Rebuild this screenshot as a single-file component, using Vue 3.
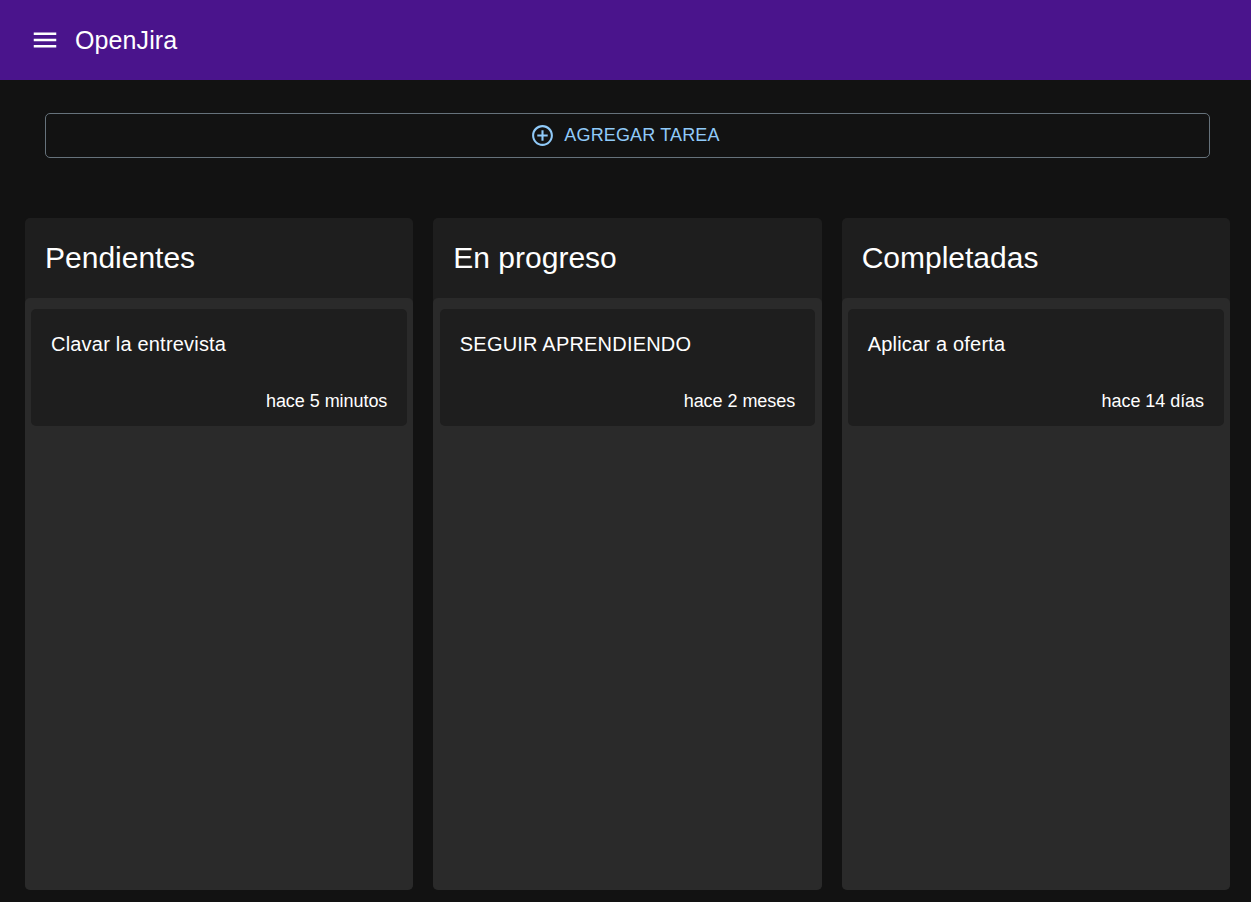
<template>
    <div class="page">
        <header class="navbar">
            <button class="menu-btn" aria-label="menu">
                <svg viewBox="0 0 24 24" width="30" height="30">
                    <path d="M3 18h18v-2H3v2zm0-5h18v-2H3v2zm0-7v2h18V6H3z" />
                </svg>
            </button>
            <span class="brand">OpenJira</span>
        </header>

        <main class="content">
            <button class="add-btn">
                <svg viewBox="0 0 24 24" width="25" height="25">
                    <path d="M13 7h-2v4H7v2h4v4h2v-4h4v-2h-4V7zm-1-5C6.48 2 2 6.48 2 12s4.48 10 10 10 10-4.48 10-10S17.52 2 12 2zm0 18c-4.41 0-8-3.59-8-8s3.59-8 8-8 8 3.59 8 8-3.59 8-8 8z" />
                </svg>
                AGREGAR TAREA
            </button>

            <div class="board">
                <section v-for="col in columns" :key="col.title" class="column">
                    <h2 class="column-title">{{ col.title }}</h2>
                    <div class="column-body">
                        <article v-for="task in col.tasks" :key="task.text" class="task">
                            <p class="task-text">{{ task.text }}</p>
                            <span class="task-date">{{ task.date }}</span>
                        </article>
                    </div>
                </section>
            </div>
        </main>
    </div>
</template>

<script setup>
const columns = [
    { title: 'Pendientes', tasks: [{ text: 'Clavar la entrevista', date: 'hace 5 minutos' }] },
    { title: 'En progreso', tasks: [{ text: 'SEGUIR APRENDIENDO', date: 'hace 2 meses' }] },
    { title: 'Completadas', tasks: [{ text: 'Aplicar a oferta', date: 'hace 14 días' }] }
]
</script>

<style>
html,
body {
    margin: 0;
    background-color: #121212;
}
</style>

<style scoped>
.page {
    height: 902px;
    overflow: hidden;
    background-color: #121212;
    color: #fff;
    font-family: "Liberation Sans", Arial, sans-serif;
}

.navbar {
    height: 80px;
    box-sizing: border-box;
    display: flex;
    align-items: center;
    padding-left: 30px;
    background-color: #4a148c;
}

.menu-btn {
    width: 30px;
    height: 30px;
    padding: 0;
    border: none;
    background: none;
    display: flex;
}

.menu-btn svg {
    fill: #fff;
}

.brand {
    margin-left: 15px;
    font-size: 25px;
    letter-spacing: 0.1px;
}

.content {
    padding: 33px 21px 0 25px;
}

.add-btn {
    width: 1165px;
    height: 45px;
    margin-left: 20px;
    padding: 0 5px 0 0;
    display: flex;
    align-items: center;
    justify-content: center;
    gap: 9px;
    box-sizing: border-box;
    background: none;
    border: 1px solid #66727b;
    border-radius: 5px;
    color: #90caf9;
    font-family: inherit;
    font-size: 18px;
    letter-spacing: 0.15px;
}

.add-btn svg {
    fill: #90caf9;
}

.board {
    margin-top: 60px;
    display: grid;
    grid-template-columns: repeat(3, 1fr);
    gap: 20px;
}

.column {
    height: 672px;
    display: flex;
    flex-direction: column;
    background-color: #1e1e1e;
    border-radius: 5px;
    overflow: hidden;
}

.column-title {
    height: 80px;
    box-sizing: border-box;
    margin: 0;
    padding: 0 20px;
    display: flex;
    align-items: center;
    font-size: 30px;
    font-weight: 400;
}

.column-body {
    flex: 1;
    padding: 11px 6px;
    background-color: #2a2a2a;
    border-radius: 5px 5px 0 0;
}

.column:nth-child(2) .column-body {
    padding-inline: 6.5px;
}

.task {
    height: 117px;
    box-sizing: border-box;
    padding: 0 20px;
    display: flex;
    flex-direction: column;
    background-color: #1e1e1e;
    border-radius: 5px;
}

.task-text {
    margin: 23px 0 0;
    font-size: 20px;
    line-height: 24px;
    letter-spacing: 0.2px;
}

.task-date {
    margin-top: auto;
    margin-bottom: 14px;
    text-align: right;
    font-size: 18px;
    line-height: 22px;
    letter-spacing: -0.05px;
}
</style>
